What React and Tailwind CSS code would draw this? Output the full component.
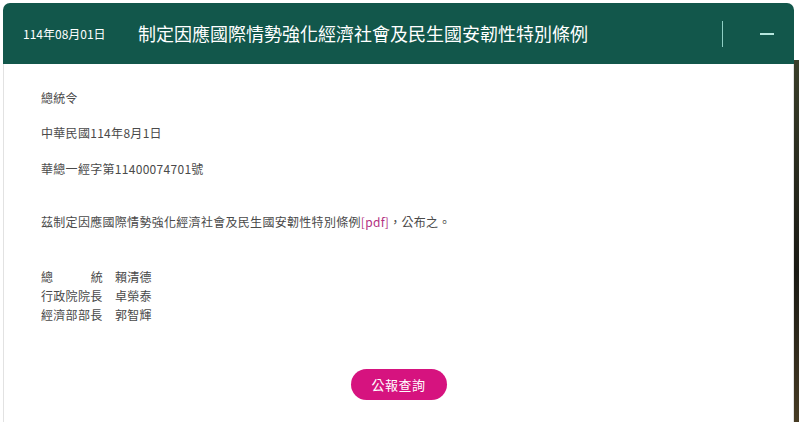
const font = { fontFamily: '"Noto Sans CJK TC", "Noto Sans", sans-serif' };

function Signer({ label, name, spread }) {
  return (
    <div className="flex h-[19px] items-center whitespace-nowrap">
      {spread ? (
        <span className="flex w-[62px] shrink-0 justify-between">
          {label.split('').map((c, i) => (
            <span key={i}>{c}</span>
          ))}
        </span>
      ) : (
        <span className="w-[62px] shrink-0">{label}</span>
      )}
      <span className="ml-[12px]">{name}</span>
    </div>
  );
}

export default function App() {
  return (
    <div className="flex h-[422px] w-[799px] overflow-hidden bg-white" style={font}>
      <div className="ml-[3px] mt-[3px] flex w-[791px] flex-col">
        {/* header */}
        <div className="flex h-[61px] items-center rounded-t-[7px] bg-[#12574b] text-white">
          <span className="ml-[20px] w-[115px] text-[12px]">114年08月01日</span>
          <h2 className="text-[18px]">制定因應國際情勢強化經濟社會及民生國安韌性特別條例</h2>
          <div className="ml-auto h-[26px] w-px bg-[#8fcfc4]" />
          <div className="ml-[37px] mr-[20px] h-[2px] w-[14px] bg-[#b5e6dd]" />
        </div>

        {/* body */}
        <div className="flex flex-1 flex-col border-x border-[#e2e2e2] px-[37px] pt-[24px] text-[12px] leading-[19px] tracking-[0.3px] text-[#4a4a4a]">
          <p>總統令</p>
          <p className="mt-[16px]">中華民國114年8月1日</p>
          <p className="mt-[17px]">華總一經字第11400074701號</p>
          <p className="mt-[34px]">
            茲制定因應國際情勢強化經濟社會及民生國安韌性特別條例
            <span className="text-[#b2307f]">[pdf]</span>，公布之。
          </p>
          <div className="mt-[36px]">
            <Signer label="總統" name="賴清德" spread />
            <Signer label="行政院院長" name="卓榮泰" />
            <Signer label="經濟部部長" name="郭智輝" />
          </div>
          <div className="mt-[45px] flex justify-center">
            <button className="h-[31px] w-[96px] rounded-full bg-[#d6137f] text-[13px] tracking-[0.5px] text-white">
              公報查詢
            </button>
          </div>
        </div>
      </div>
      <div className="ml-auto mt-[60px] h-full w-[5px] bg-gradient-to-b from-[#3a3f2a] via-[#1a1a14] to-[#5b4a2a]" />
    </div>
  );
}
